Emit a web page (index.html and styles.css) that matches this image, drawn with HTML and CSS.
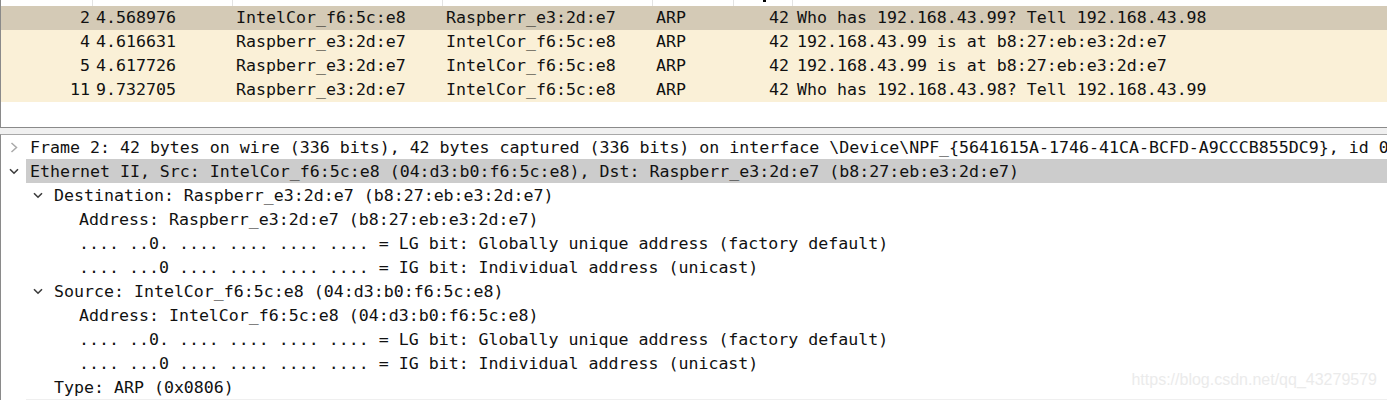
FILE: index.html
```html
<!DOCTYPE html>
<html>
<head>
<meta charset="utf-8">
<link rel="stylesheet" href="styles.css">
</head>
<body>
<div class="app">
  <div class="list-pane">
    <div class="list-head">
      <div class="hc"></div><div class="hc"></div><div class="hc"></div><div class="hc"></div><div class="hc"></div><div class="hc"><span class="sort-tip"></span></div><div class="hc"></div>
    </div>
    <div class="prow sel">
      <span class="c num">2</span><span class="c">4.568976</span><span class="c">IntelCor_f6:5c:e8</span><span class="c">Raspberr_e3:2d:e7</span><span class="c">ARP</span><span class="c len">42</span><span class="c info">Who has 192.168.43.99? Tell 192.168.43.98</span>
    </div>
    <div class="prow arp">
      <span class="c num">4</span><span class="c">4.616631</span><span class="c">Raspberr_e3:2d:e7</span><span class="c">IntelCor_f6:5c:e8</span><span class="c">ARP</span><span class="c len">42</span><span class="c info">192.168.43.99 is at b8:27:eb:e3:2d:e7</span>
    </div>
    <div class="prow arp">
      <span class="c num">5</span><span class="c">4.617726</span><span class="c">Raspberr_e3:2d:e7</span><span class="c">IntelCor_f6:5c:e8</span><span class="c">ARP</span><span class="c len">42</span><span class="c info">192.168.43.99 is at b8:27:eb:e3:2d:e7</span>
    </div>
    <div class="prow arp">
      <span class="c num">11</span><span class="c">9.732705</span><span class="c">Raspberr_e3:2d:e7</span><span class="c">IntelCor_f6:5c:e8</span><span class="c">ARP</span><span class="c len">42</span><span class="c info">Who has 192.168.43.98? Tell 192.168.43.99</span>
    </div>
  </div>
  <div class="splitter"></div>
  <div class="detail-pane">
    <div class="drow l0">
      <span class="arrow"><svg width="8" height="11" viewBox="0 0 8 11"><path d="M1.5 1 L6.5 5.5 L1.5 10" fill="none" stroke="#a9a9a9" stroke-width="1.5"/></svg></span>
      <span class="lbl">Frame 2: 42 bytes on wire (336 bits), 42 bytes captured (336 bits) on interface \Device\NPF_{5641615A-1746-41CA-BCFD-A9CCCB855DC9}, id 0</span>
    </div>
    <div class="drow l0">
      <span class="arrow"><svg width="10" height="7" viewBox="0 0 10 7"><path d="M1 1.2 L5 5.2 L9 1.2" fill="none" stroke="#3c3c3c" stroke-width="1.6"/></svg></span>
      <span class="lbl hl">Ethernet II, Src: IntelCor_f6:5c:e8 (04:d3:b0:f6:5c:e8), Dst: Raspberr_e3:2d:e7 (b8:27:eb:e3:2d:e7)</span>
    </div>
    <div class="drow l1">
      <span class="arrow"><svg width="10" height="7" viewBox="0 0 10 7"><path d="M1 1.2 L5 5.2 L9 1.2" fill="none" stroke="#3c3c3c" stroke-width="1.6"/></svg></span>
      <span class="lbl">Destination: Raspberr_e3:2d:e7 (b8:27:eb:e3:2d:e7)</span>
    </div>
    <div class="drow l2"><span class="arrow"></span><span class="lbl">Address: Raspberr_e3:2d:e7 (b8:27:eb:e3:2d:e7)</span></div>
    <div class="drow l2"><span class="arrow"></span><span class="lbl">.... ..0. .... .... .... .... = LG bit: Globally unique address (factory default)</span></div>
    <div class="drow l2"><span class="arrow"></span><span class="lbl">.... ...0 .... .... .... .... = IG bit: Individual address (unicast)</span></div>
    <div class="drow l1">
      <span class="arrow"><svg width="10" height="7" viewBox="0 0 10 7"><path d="M1 1.2 L5 5.2 L9 1.2" fill="none" stroke="#3c3c3c" stroke-width="1.6"/></svg></span>
      <span class="lbl">Source: IntelCor_f6:5c:e8 (04:d3:b0:f6:5c:e8)</span>
    </div>
    <div class="drow l2"><span class="arrow"></span><span class="lbl">Address: IntelCor_f6:5c:e8 (04:d3:b0:f6:5c:e8)</span></div>
    <div class="drow l2"><span class="arrow"></span><span class="lbl">.... ..0. .... .... .... .... = LG bit: Globally unique address (factory default)</span></div>
    <div class="drow l2"><span class="arrow"></span><span class="lbl">.... ...0 .... .... .... .... = IG bit: Individual address (unicast)</span></div>
    <div class="drow l1"><span class="arrow"></span><span class="lbl">Type: ARP (0x0806)</span></div>
    <div class="drow l0"><span class="arrow"></span><span class="lbl hover"></span></div>
  </div>
  <div class="watermark">https://blog.csdn.net/qq_43279579</div>
</div>
</body>
</html>
```
FILE: styles.css
```css
html, body {
  margin: 0;
  padding: 0;
  background: #ffffff;
  overflow: hidden;
}
.app {
  position: relative;
  width: 1387px;
  height: 400px;
  overflow: hidden;
  font-family: "DejaVu Sans Mono", "Liberation Mono", monospace;
  font-size: 16.6px;
  color: #111111;
}
.list-pane {
  height: 127px;
  border-left: 1px solid #8a8a8a;
  border-bottom: 1px solid #8a8a8a;
  background: #ffffff;
  box-sizing: content-box;
}
.list-head,
.prow {
  display: grid;
  grid-template-columns: 91px 140px 210px 210px 81px 59px 1fr;
}
.list-head {
  height: 6px;
  background: #ffffff;
}
.hc {
  position: relative;
  border-left: 1px solid #e3e3e3;
}
.hc:first-child {
  border-left: none;
}
.sort-tip {
  position: absolute;
  left: 29px;
  top: 0;
  width: 3px;
  height: 2px;
  background: #000000;
}
.prow {
  height: 24px;
  line-height: 24px;
  white-space: nowrap;
}
.prow.sel {
  background: #d4cab6;
}
.prow.arp {
  background: #faf0d7;
}
.c {
  padding-left: 4px;
  overflow: hidden;
}
.c.num {
  text-align: right;
  padding-left: 0;
  padding-right: 2px;
}
.c.len {
  text-align: right;
  padding-left: 0;
  padding-right: 3px;
}
.c.info {
  padding-left: 5px;
}
.splitter {
  height: 6px;
  background: #f0f0f0;
}
.detail-pane {
  border-left: 1px solid #8a8a8a;
  border-top: 1px solid #a8a8a8;
  background: #ffffff;
}
.drow {
  display: flex;
  height: 24px;
  line-height: 25px;
  white-space: nowrap;
}
.drow.l1 { padding-left: 24px; }
.drow.l2 { padding-left: 49px; }
.arrow {
  flex: 0 0 25px;
  width: 25px;
  display: flex;
  align-items: center;
  justify-content: center;
}
.lbl {
  flex: 1 1 auto;
  padding-left: 4px;
  overflow: hidden;
}
.lbl.hl {
  background: #cccccc;
}
.lbl.hover {
  background: #efefef;
}
.watermark {
  position: absolute;
  right: 10px;
  top: 371px;
  font-family: "Liberation Sans", Arial, sans-serif;
  font-size: 16px;
  color: #ebebeb;
  line-height: 18px;
}
```
